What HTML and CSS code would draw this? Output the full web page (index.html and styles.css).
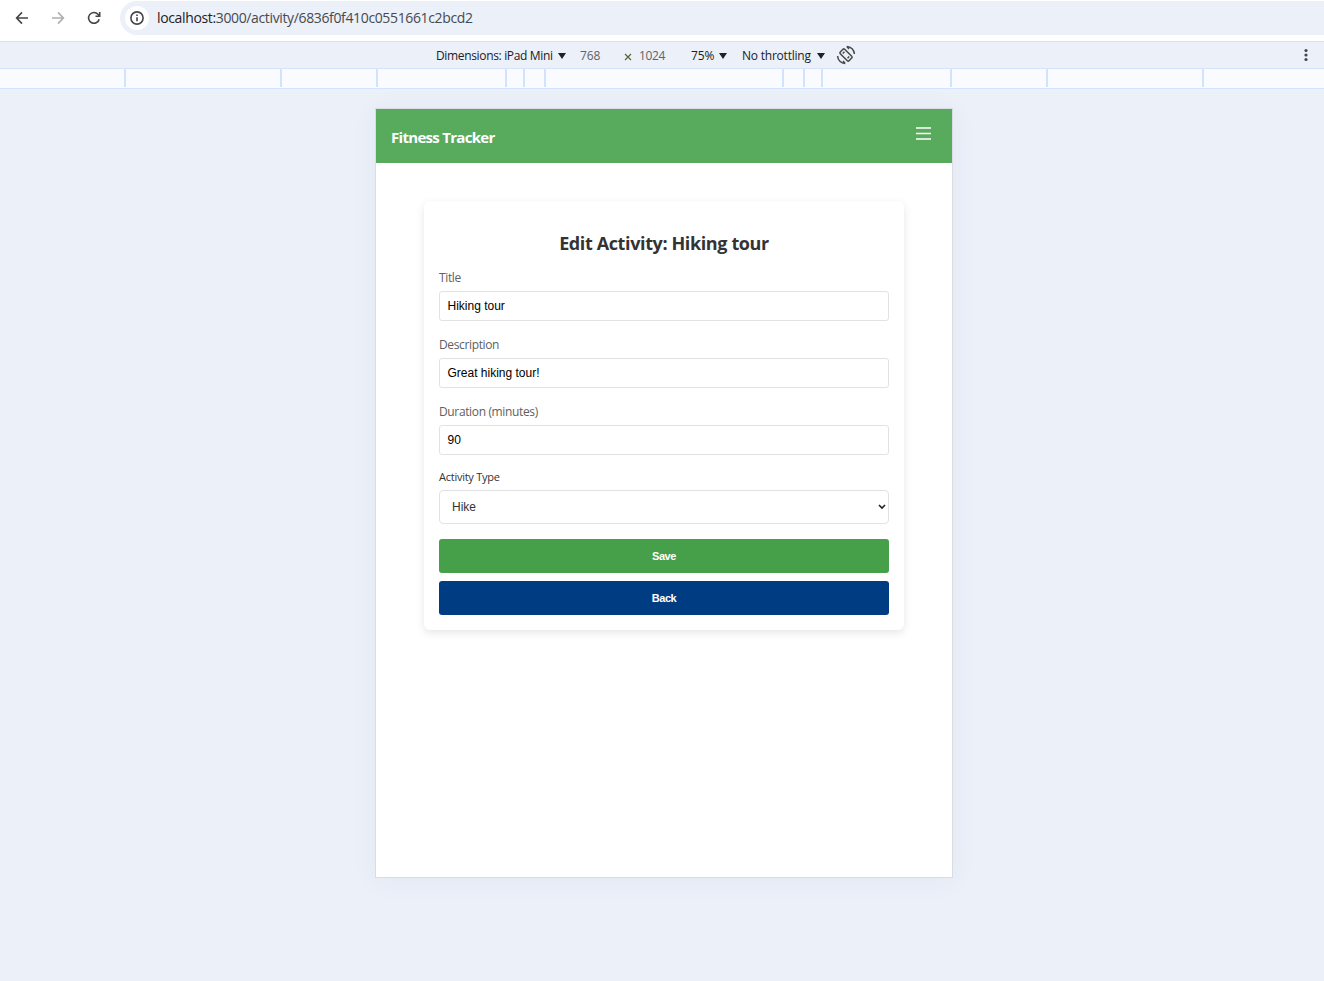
FILE: index.html
```
<!DOCTYPE html>
<html lang="en">
<head>
<meta charset="utf-8">
<title>Fitness Tracker</title>
<link rel="stylesheet" href="styles.css">
</head>
<body>
<div class="browser-bar">
  <nav class="nav-icons">
    <svg width="16" height="16" viewBox="0 0 16 16" class="ico"><path d="M14 8H3M8 2.4 2.6 8 8 13.6"/></svg>
    <svg width="16" height="16" viewBox="0 0 16 16" class="ico ico-off"><path d="M2 8h11M8 2.4 13.4 8 8 13.6"/></svg>
    <svg width="16" height="16" viewBox="0 0 16 16" class="ico"><path d="M13.2 9.2A5.4 5.4 0 1 1 12 4.3l1.6 1.6M13.7 2v4.2H9.5"/></svg>
  </nav>
  <div class="omnibox">
    <span class="site-info">
      <svg width="16" height="16" viewBox="0 0 16 16" class="ico"><circle cx="8" cy="8" r="6.1"/><path d="M8 7.3v3.9M8 4.6v1.5"/></svg>
    </span>
    <span class="url"><b>localhost:</b>3000/activity/6836f0f410c0551661c2bcd2</span>
  </div>
</div>
<div class="device-bar">
  <span class="t-dim">Dimensions: iPad Mini</span><i class="arrow"></i>
  <span class="t-w">768</span><svg class="times" width="8" height="8" viewBox="0 0 8 8"><path d="M1 1l6 6M7 1 1 7"/></svg><span class="t-h">1024</span>
  <span class="t-zoom">75%</span><i class="arrow"></i>
  <span class="t-throttle">No throttling</span><i class="arrow"></i>
  <svg class="rotate" width="20" height="20" viewBox="0 0 20 20"><g transform="rotate(-45 10 10)"><rect x="6.900" y="3.800" width="6.200" height="12.400" rx="1.200"/><path d="M8.800 6.600h2.400M8.800 13.400h2.400"/></g><path d="M10.800 1.600c4.200.1 7.400 3.200 7.600 7.400M10.800 1.600l2.200 2.300M9.200 18.400C5 18.300 1.800 15.200 1.600 11M9.200 18.400 7 16.100"/></svg>
  <svg class="more" width="6" height="14" viewBox="0 0 6 14"><circle cx="3" cy="2.500" r="1.600"/><circle cx="3" cy="7" r="1.600"/><circle cx="3" cy="11.500" r="1.600"/></svg>
</div>
<div class="ruler"><i></i><i></i><i></i><i></i><i></i><i></i><i></i><i></i><i></i><i></i><i></i><i></i></div>
<main class="stage">
  <div class="device">
    <header class="app-header">
      <span class="brand">Fitness Tracker</span>
      <svg class="menu" width="15" height="13" viewBox="0 0 15 13"><path d="M0 1h15M0 6.500h15M0 12h15"/></svg>
    </header>
    <form class="card">
      <h1 class="heading">Edit Activity: Hiking tour</h1>
      <label class="label">Title</label>
      <div class="field">Hiking tour</div>
      <label class="label">Description</label>
      <div class="field">Great hiking tour!</div>
      <label class="label">Duration (minutes)</label>
      <div class="field">90</div>
      <label class="label label-type">Activity Type</label>
      <div class="field select">Hike<svg width="8" height="6" viewBox="0 0 8 6"><path d="M1 1l3 3 3-3"/></svg></div>
      <button type="button" class="btn save">Save</button>
      <button type="button" class="btn back">Back</button>
    </form>
  </div>
</main>
</body>
</html>
```
FILE: styles.css
```
* { box-sizing: border-box; }
body {
  margin: 0;
  width: 1324px;
  height: 981px;
  overflow: hidden;
  display: flex;
  flex-direction: column;
  background: #ebf0f9;
  font-family: "Open Sans", "Noto Sans", sans-serif;
}
svg { display: block; flex: none; }
.browser-bar {
  height: 42px;
  flex: none;
  display: flex;
  background: #fff;
  border-bottom: 1px solid #dcdfe4;
}
.nav-icons { display: flex; gap: 20px; padding: 10px 18px 0 14px; }
.ico { fill: none; stroke: #434649; stroke-width: 1.6; }
.ico-off { stroke: #adafb1; }
.omnibox {
  flex: 1;
  height: 34px;
  margin-top: 1px;
  display: flex;
  align-items: center;
  padding-left: 5px;
  background: #ebf0f9;
  border-radius: 17px 0 0 17px;
}
.site-info {
  width: 24px;
  height: 24px;
  display: grid;
  place-items: center;
  border-radius: 50%;
  background: #fff;
}
.url {
  margin-left: 8px;
  font-size: 14px;
  line-height: 20px;
  letter-spacing: -0.36px;
  color: #474a4e;
  white-space: nowrap;
}
.url b { font-weight: 400; color: #1f2124; }
.device-bar {
  height: 27px;
  flex: none;
  display: flex;
  align-items: center;
  padding: 0 15px 0 436px;
  border-bottom: 1px solid #d3e3fd;
  font-size: 12px;
  line-height: 18px;
  color: #202124;
  white-space: nowrap;
}
.device-bar span { flex: none; padding-top: 1px; letter-spacing: -0.15px; }
.arrow {
  width: 8px;
  height: 6px;
  flex: none;
  margin-top: 2px;
  background: #202124;
  clip-path: polygon(0 0, 100% 0, 50% 100%);
}
.device-bar .t-dim { width: 122px; letter-spacing: -0.34px; }
.t-w { width: 44px; margin-left: 14px; color: #5f6368; }
.times { fill: none; stroke: #56602f; stroke-width: 1.1; margin-top: 3px; }
.device-bar .t-h { width: 52px; margin-left: 7px; letter-spacing: -0.4px; color: #5f6368; }
.t-zoom { width: 28px; }
.t-throttle { width: 75px; margin-left: 15px; }
.device-bar .t-throttle { letter-spacing: -0.22px; }
.rotate { margin-left: 11px; fill: none; stroke: #45484b; stroke-width: 1.5; }
.more { margin-left: auto; fill: #45484b; }
.ruler {
  height: 20px;
  flex: none;
  display: grid;
  grid-template-columns: 126px 156px 96px 129px 18px 21px 238px 21px 18px 129px 96px 156px;
  padding-bottom: 1px;
  background: #f9fbff;
  border-bottom: 1px solid #d3e3fd;
}
.ruler i { border-right: 2px solid #d3e3fd; }
.stage { flex: 1; padding: 19px 0 0 375px; }
.device {
  width: 578px;
  height: 770px;
  background: #fff;
  border: 1px solid #d9dde3;
  box-shadow: 0 2px 26px rgba(60, 80, 100, 0.05);
}
.app-header {
  height: 54px;
  display: flex;
  justify-content: space-between;
  padding: 0 21px 0 15px;
  background: #58ab5d;
}
.brand {
  padding-top: 17px;
  font-size: 15px;
  line-height: 22px;
  font-weight: 700;
  letter-spacing: -0.7px;
  color: #fff;
}
.menu { margin-top: 18px; fill: none; stroke: #fff; stroke-width: 1.3; }
.card {
  width: 480px;
  height: 429px;
  margin: 38px 48px 0;
  padding: 29px 15px 0;
  display: flex;
  flex-direction: column;
  background: #fff;
  border-radius: 6px;
  box-shadow: 0 3px 9px rgba(0, 0, 0, 0.1);
}
.heading {
  margin: 0;
  height: 27px;
  font-size: 18px;
  line-height: 26px;
  font-weight: 700;
  letter-spacing: -0.38px;
  text-align: center;
  color: #333;
}
.label {
  height: 20px;
  margin-top: 11px;
  font-size: 12px;
  line-height: 20px;
  letter-spacing: -0.36px;
  color: #606060;
}
.field + .label { margin-top: 14px; }
.field {
  height: 30px;
  margin-top: 3px;
  padding: 0 7.5px;
  border: 1px solid #e2e2e2;
  border-radius: 3px;
  background: #fff;
  font: 12px/28px "Liberation Sans", Arial, sans-serif;
  color: #000;
}
.field + .label-type {
  margin-top: 12px;
  font-size: 11px;
  font-weight: 500;
  letter-spacing: -0.25px;
  color: #333;
}
.select {
  height: 34px;
  padding: 0 2px 0 12px;
  display: flex;
  align-items: center;
  justify-content: space-between;
  border-radius: 4px;
  line-height: 32px;
  color: #333;
}
.select svg { fill: none; stroke: #222; stroke-width: 1.6; }
.btn {
  height: 34px;
  margin: 15px 0 0;
  padding: 0;
  border: 0;
  border-radius: 3px;
  font: 700 11px/34px "Liberation Sans", Arial, sans-serif;
  letter-spacing: -0.45px;
  color: #fff;
}
.save { background: #46a049; }
.back { margin-top: 8px; background: #003c82; }
```
